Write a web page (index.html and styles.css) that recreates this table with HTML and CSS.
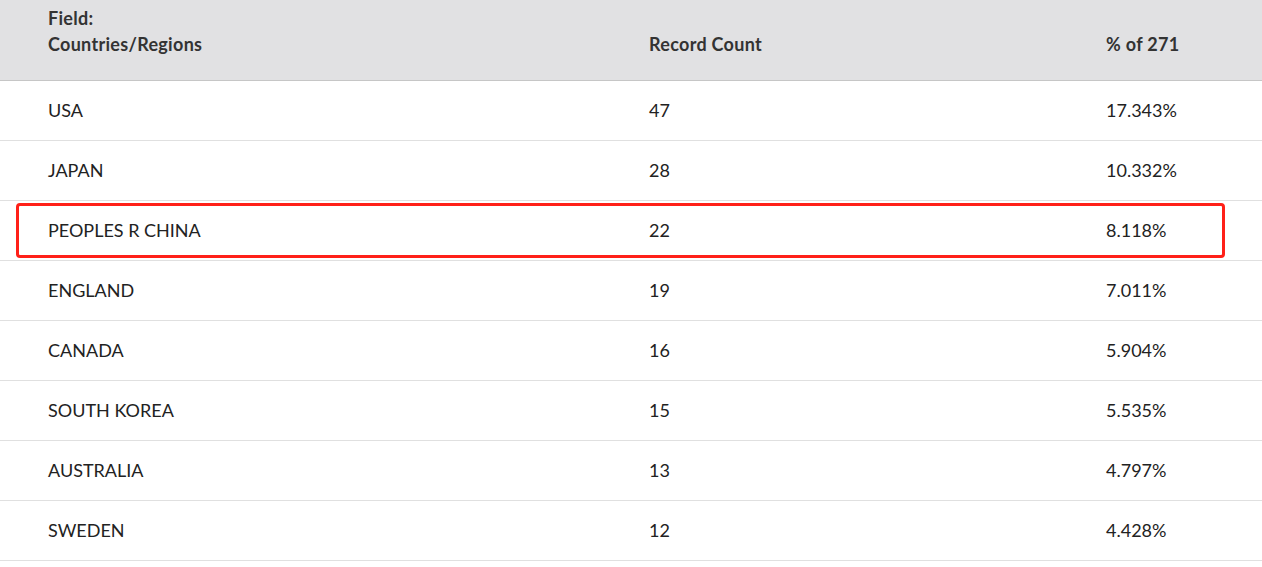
FILE: index.html
```html
<!DOCTYPE html>
<html>
<head>
<meta charset="utf-8">
<link rel="stylesheet" href="styles.css">
</head>
<body>
<div class="table">
  <div class="row head">
    <div class="cell c1">Field:<br>Countries/Regions</div>
    <div class="cell c2">Record Count</div>
    <div class="cell c3">% of 271</div>
  </div>
  <div class="row"><div class="cell c1">USA</div><div class="cell c2">47</div><div class="cell c3">17.343%</div></div>
  <div class="row"><div class="cell c1">JAPAN</div><div class="cell c2">28</div><div class="cell c3">10.332%</div></div>
  <div class="row marked"><div class="cell c1">PEOPLES R CHINA</div><div class="cell c2">22</div><div class="cell c3">8.118%</div><div class="mark"></div></div>
  <div class="row"><div class="cell c1">ENGLAND</div><div class="cell c2">19</div><div class="cell c3">7.011%</div></div>
  <div class="row"><div class="cell c1">CANADA</div><div class="cell c2">16</div><div class="cell c3">5.904%</div></div>
  <div class="row"><div class="cell c1">SOUTH KOREA</div><div class="cell c2">15</div><div class="cell c3">5.535%</div></div>
  <div class="row"><div class="cell c1">AUSTRALIA</div><div class="cell c2">13</div><div class="cell c3">4.797%</div></div>
  <div class="row"><div class="cell c1">SWEDEN</div><div class="cell c2">12</div><div class="cell c3">4.428%</div></div>
</div>
</body>
</html>
```
FILE: styles.css
```css
html, body {
  margin: 0;
  padding: 0;
  background: #ffffff;
}
body {
  font-family: "Lato", "Noto Sans", sans-serif;
  font-size: 18px;
  color: #222222;
}
.table {
  width: 1262px;
}
.row {
  display: grid;
  grid-template-columns: 649px 457px 1fr;
  align-items: center;
  height: 59px;
  border-bottom: 1px solid #e0e0e0;
  position: relative;
}
.cell { padding-bottom: 2px; }
.cell.c1 { padding-left: 48px; }
.row.head {
  height: 80px;
  align-items: start;
  background: #e1e1e3;
  border-bottom: 1px solid #c6c6c6;
  color: #333333;
  font-weight: 700;
  line-height: 26px;
  letter-spacing: 0.3px;
}
.row.head .cell { padding-top: 5px; padding-bottom: 0; }
.row.head .c2, .row.head .c3 { padding-top: 31px; }
.mark {
  position: absolute;
  left: 16px;
  top: 2px;
  width: 1203px;
  height: 49px;
  border: 3px solid #ff2018;
  border-radius: 4px;
  pointer-events: none;
}
```
